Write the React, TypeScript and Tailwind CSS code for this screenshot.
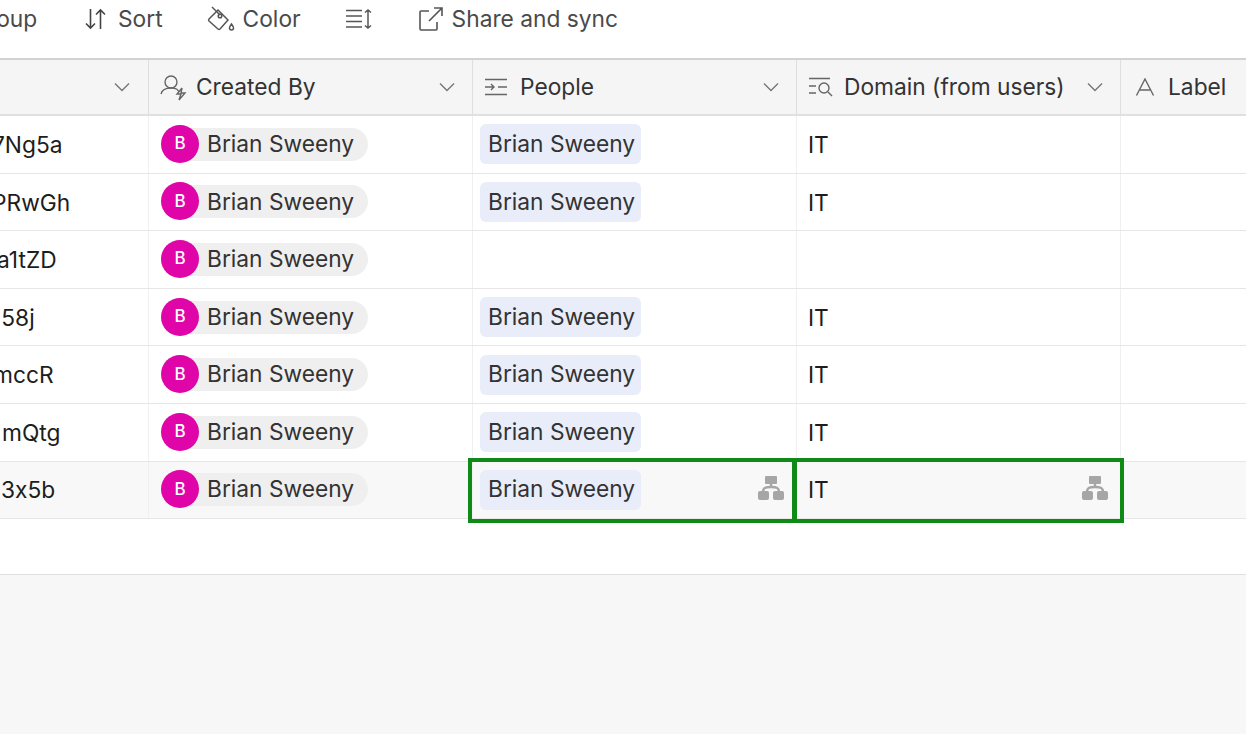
import { ReactNode } from "react";

const rows = [
  { id: "7Ng5a", offset: "-ml-[8px]", people: true },
  { id: "PRwGh", offset: "-ml-[8px]", people: true },
  { id: "a1tZD", offset: "-ml-[3px]", people: false },
  { id: "158j", offset: "-ml-[8px]", people: true },
  { id: "mccR", offset: "-ml-[7px]", people: true },
  { id: "mQtg", offset: "ml-[2px]", people: true },
  { id: "3x5b", offset: "ml-[1px]", people: true, selected: true },
];

function Chevron() {
  return (
    <svg width="18" height="18" viewBox="0 0 18 18" fill="none" stroke="#777" strokeWidth="1.4" className="shrink-0">
      <path d="M2 5.5 9 12.5 16 5.5" />
    </svg>
  );
}

function Tree() {
  return (
    <svg width="26" height="24" viewBox="0 0 26 24" fill="#a6a6a6" className="shrink-0">
      <rect x="7" y="0" width="12" height="8" rx="1" />
      <rect x="0" y="15" width="11" height="9" rx="2" />
      <rect x="15" y="15" width="11" height="9" rx="2" />
      <path d="M5 16c0-4 2-5 8-5s8 1 8 5" fill="none" stroke="#a6a6a6" strokeWidth="2.5" />
      <path d="M13 7v5" stroke="#a6a6a6" strokeWidth="2.5" />
    </svg>
  );
}

function HeaderCell({ icon, label, gap = "gap-2" }: { icon: ReactNode; label: string; gap?: string }) {
  return (
    <div className="w-[324px] shrink-0 border-r border-[#dedede] flex items-center justify-between pl-[11px] pr-[16px]">
      <div className={`flex items-center ${gap}`}>
        {icon}
        <span className="text-[#333]">{label}</span>
      </div>
      <Chevron />
    </div>
  );
}

function CreatedBy() {
  return (
    <div className="w-[324px] shrink-0 border-r border-[#f0f0f0] flex items-center pl-[12px]">
      <div className="flex items-center h-[33px] w-[207px] rounded-full bg-[#efefef]">
        <div className="w-[38px] h-[38px] shrink-0 -mt-[1px] rounded-full bg-[#df05a8] flex items-center justify-center text-white text-[17px] font-medium">
          B
        </div>
        <span className="ml-[8px] text-[#333]">Brian Sweeny</span>
      </div>
    </div>
  );
}

export default function App() {
  return (
    <div className="h-[734px] w-[1246px] overflow-hidden bg-[#f7f7f7] flex flex-col font-['Inter',sans-serif] text-[22.75px] leading-none whitespace-nowrap [font-feature-settings:'calt'_0]">
      {/* toolbar */}
      <div className="h-[60px] shrink-0 bg-white border-b-2 border-[#d2d2d2] flex items-start pt-[7px] text-[#4a4a4a]">
        <span className="-ml-[29px] h-[24px] w-[66px] flex items-center">Group</span>
        <div className="ml-[48px] h-[24px] flex items-center gap-[12px]">
          <svg width="21" height="22" viewBox="0 0 21 22" fill="none" stroke="#444" strokeWidth="1.6">
            <path d="M5.5 1v19M1 15.5 5.5 20 10 15.5" />
            <path d="M15.5 21V2M11 6.5 15.5 2 20 6.5" />
          </svg>
          <span>Sort</span>
        </div>
        <div className="ml-[44px] h-[24px] flex items-center gap-[8px]">
          <svg width="28" height="26" viewBox="0 0 28 26" fill="none" stroke="#555" strokeWidth="1.5">
            <path d="M2 13 11 4l10 10-8 9a1.5 1.5 0 0 1-2 0L2 15a1.5 1.5 0 0 1 0-2Z" />
            <path d="M5 1 13 9" />
            <circle cx="13" cy="10" r="1.8" />
            <path d="M24.5 18c1.5 2 2 3 2 4a2 2 0 0 1-4 0c0-1 .5-2 2-4Z" />
          </svg>
          <span>Color</span>
        </div>
        <div className="ml-[45px] h-[24px] flex items-center">
          <svg width="27" height="20" viewBox="0 0 27 20" fill="none" stroke="#555" strokeWidth="1.5">
            <path d="M0 1.5h16M0 7h16M0 12.500h16M0 18h16" />
            <path d="M22 1v18M19 3.500 22 1l3 2.500M19 16.500l3 2.500 3-2.500" />
          </svg>
        </div>
        <div className="ml-[46px] h-[24px] flex items-center gap-[9px]">
          <svg width="24" height="24" viewBox="0 0 24 24" fill="none" stroke="#555" strokeWidth="1.6">
            <path d="M10 4H2a1 1 0 0 0-1 1v17a1 1 0 0 0 1 1h15a1 1 0 0 0 1-1v-7" />
            <path d="M10 14 23 1M15 1h8v8" />
          </svg>
          <span>Share and sync</span>
        </div>
      </div>

      {/* header */}
      <div className="h-[56px] shrink-0 flex bg-[#f5f5f5] border-b-2 border-[#e0e0e0]">
        <div className="w-[149px] shrink-0 border-r border-[#dedede] flex items-center justify-end pr-[17px]">
          <Chevron />
        </div>
        <HeaderCell
          label="Created By"
          gap="gap-[8px]"
          icon={
            <svg width="28" height="28" viewBox="0 0 28 28" fill="none" stroke="#666" strokeWidth="1.4">
              <circle cx="11" cy="9" r="6" />
              <path d="M1 21c1-4 4-6 10-6s7 2 8 4" />
              <path d="M22 15l-5 6h4l-2 6 6-7h-4Z" />
            </svg>
          }
        />
        <HeaderCell
          label="People"
          gap="gap-[12px]"
          icon={
            <svg width="24" height="18" viewBox="0 0 24 18" fill="none" stroke="#666" strokeWidth="1.4">
              <path d="M1 1.500h22M1 16.500h22M14 9h9" />
              <path d="M1 9h9M7 6l3 3-3 3" />
            </svg>
          }
        />
        <HeaderCell
          label="Domain (from users)"
          gap="gap-[11px]"
          icon={
            <svg width="25" height="20" viewBox="0 0 25 20" fill="none" stroke="#666" strokeWidth="1.4">
              <path d="M1 1.500h21M1 9h7M1 16h7" />
              <circle cx="16" cy="11" r="5" />
              <path d="M20 15l4 4" />
            </svg>
          }
        />
        <div className="flex-1 flex items-center gap-[13px] pl-[14px] text-[#333]">
          <svg width="20" height="18" viewBox="0 0 20 18" fill="none" stroke="#666" strokeWidth="1.4">
            <path d="M1.500 17.500 10 1l8.500 16.500M5 12h10" />
          </svg>
          <span>Label</span>
        </div>
      </div>

      {/* rows */}
      {rows.map((row) => (
        <div
          key={row.id}
          className={`h-[57.6px] shrink-0 flex border-b border-[#e6e6e6] ${row.selected ? "bg-[#f8f8f8]" : "bg-white"}`}
        >
          <div className="w-[149px] shrink-0 border-r border-[#f0f0f0] overflow-hidden flex items-center pt-[2px] text-[#1d1d1d]">
            <span className={row.offset}>{row.id}</span>
          </div>
          <CreatedBy />
          <div className="relative w-[324px] shrink-0 border-r border-[#f0f0f0] flex items-center pl-[7px]">
            {row.people && (
              <span className="h-[40px] w-[161px] rounded-[6px] bg-[#e9edf9] flex items-center pl-[8px] text-[#333]">
                Brian Sweeny
              </span>
            )}
            {row.selected && (
              <>
                <div className="absolute left-[285px] top-[14px]">
                  <Tree />
                </div>
                <div className="absolute -left-[5px] -top-[4px] -bottom-[5px] right-0 border-[4px] border-[#0f8a17]" />
              </>
            )}
          </div>
          <div className="relative w-[324px] shrink-0 border-r border-[#f0f0f0] flex items-center pl-[11px] pt-[2px] text-[#1d1d1d]">
            {row.people && "IT"}
            {row.selected && (
              <>
                <div className="absolute left-[285px] top-[14px]">
                  <Tree />
                </div>
                <div className="absolute -left-[4px] -top-[4px] -bottom-[5px] -right-[4px] border-[4px] border-[#0f8a17]" />
              </>
            )}
          </div>
          <div className="flex-1" />
        </div>
      ))}

      {/* empty add-row strip */}
      <div className="h-[56px] shrink-0 bg-white border-b border-[#e0e0e0]" />
      <div className="flex-1" />
    </div>
  );
}
